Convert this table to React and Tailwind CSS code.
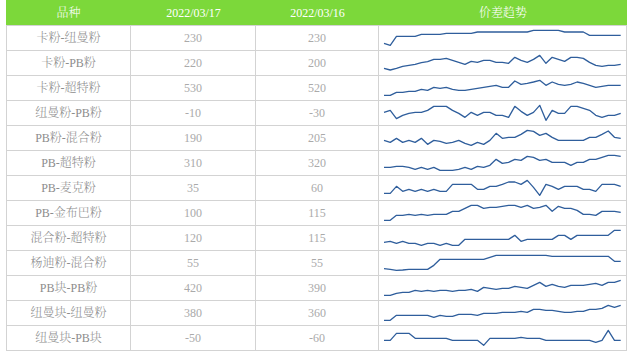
import React from "react";

const rows = [
  ["卡粉-纽曼粉", "230", "230", [55,61,34,34,34,34,28,28,28,28,25,25,25,25,25,21,21,21,21,21,21,21,21,21,16,16,16,16,16,21,21,21,21,31,31,31,31,31,31]],
  ["卡粉-PB粉", "220", "200", [55,60,55,49,46,43,38,35,28,28,25,31,37,43,34,37,31,31,37,37,40,22,31,37,28,16,40,22,28,34,22,22,25,37,46,49,46,46,43]],
  ["卡粉-超特粉", "530", "520", [61,61,52,52,49,49,43,46,37,40,37,43,46,46,43,40,37,34,31,37,37,18,28,25,21,16,31,21,28,31,28,21,25,31,37,34,31,31,31]],
  ["纽曼粉-PB粉", "-10", "-30", [37,31,56,46,40,37,37,31,19,19,19,31,40,52,37,46,37,37,46,46,52,19,34,46,37,16,61,31,40,40,19,19,25,31,46,52,46,46,40]],
  ["PB粉-混合粉", "190", "205", [46,52,40,52,46,52,40,58,46,49,55,52,46,55,61,52,58,46,25,40,37,37,28,16,19,31,25,37,46,46,46,46,46,37,37,28,18,37,40]],
  ["PB-超特粉", "310", "320", [52,52,49,49,52,58,52,58,52,61,61,61,58,52,58,49,52,46,28,40,37,28,31,19,22,31,28,37,37,37,46,37,37,28,28,22,16,16,19]],
  ["PB-麦克粉", "35", "60", [55,55,34,49,43,49,43,49,43,49,49,28,28,28,28,43,43,34,34,28,21,21,28,16,37,61,28,34,43,34,34,34,43,43,49,28,28,28,34]],
  ["PB-金布巴粉", "100", "115", [61,61,46,46,43,46,43,46,43,43,43,34,34,25,16,16,25,22,22,19,16,16,22,16,25,22,16,34,19,25,25,31,43,43,46,34,34,34,37]],
  ["混合粉-超特粉", "120", "115", [52,49,55,49,55,55,61,55,55,61,55,61,61,43,43,43,43,43,43,43,43,31,49,43,43,43,43,43,31,31,43,31,31,31,31,31,31,16,16]],
  ["杨迪粉-混合粉", "55", "55", [56,58,61,60,58,58,58,58,46,28,28,28,28,28,28,28,28,22,16,16,16,16,16,16,16,16,16,19,19,19,19,19,19,19,19,19,19,34,34]],
  ["PB块-PB粉", "420", "390", [61,61,55,52,52,46,49,46,49,46,46,49,46,46,43,49,37,40,43,40,40,34,37,40,31,22,34,28,34,37,31,31,31,28,25,31,22,22,16]],
  ["纽曼块-纽曼粉", "380", "360", [61,61,46,46,46,46,46,46,52,46,49,49,43,43,43,46,40,40,40,37,37,37,34,37,28,28,31,31,34,37,37,34,34,28,28,25,16,22,16]],
  ["纽曼块-PB块", "-50", "-60", [46,46,25,25,25,40,40,40,40,40,40,46,46,46,46,46,61,40,40,40,40,40,37,40,40,40,46,46,46,46,46,46,46,46,52,46,16,46,46]],
];

function Spark({ data }) {
  const pts = data
    .map((v, i) => {
      const x = 5 + (i * 236.7) / 38;
      const y = v / 3 - 1;
      return `${x.toFixed(2)},${y.toFixed(2)}`;
    })
    .join(" ");
  return (
    <svg width="247" height="24" viewBox="0 0 247 24" className="block">
      <polyline points={pts} fill="none" stroke="#2f5e9c" strokeWidth="1.3" strokeLinejoin="round" />
    </svg>
  );
}

const font = { fontFamily: '"Liberation Serif", "Noto Serif CJK SC", "Noto Sans CJK SC", serif' };

export default function App() {
  return (
    <div className="w-[634px] h-[358px] bg-white" style={font}>
      <div className="ml-[6px] w-[621px] text-[12px]">
        <div className="grid grid-cols-[125px_125px_123px_248px] h-[25px] bg-[#7cd83a] text-white font-light items-center text-center">
          <div>品种</div>
          <div>2022/03/17</div>
          <div>2022/03/16</div>
          <div>价差趋势</div>
        </div>
        {rows.map((r, i) => (
          <div
            key={i}
            className="grid grid-cols-[124px_125px_123px_248px] h-[25px] border-t border-l border-[#d3d3d3] last:border-b last:h-[26px] box-border"
          >
            <div className="border-r border-[#d3d3d3] flex items-center justify-center text-[#8c8c8c] font-light">{r[0]}</div>
            <div className="border-r border-[#d3d3d3] flex items-center justify-center text-[#aaa]">{r[1]}</div>
            <div className="border-r border-[#d3d3d3] flex items-center justify-center text-[#aaa]">{r[2]}</div>
            <div className="border-r border-[#d3d3d3]">
              <Spark data={r[3]} />
            </div>
          </div>
        ))}
      </div>
    </div>
  );
}
